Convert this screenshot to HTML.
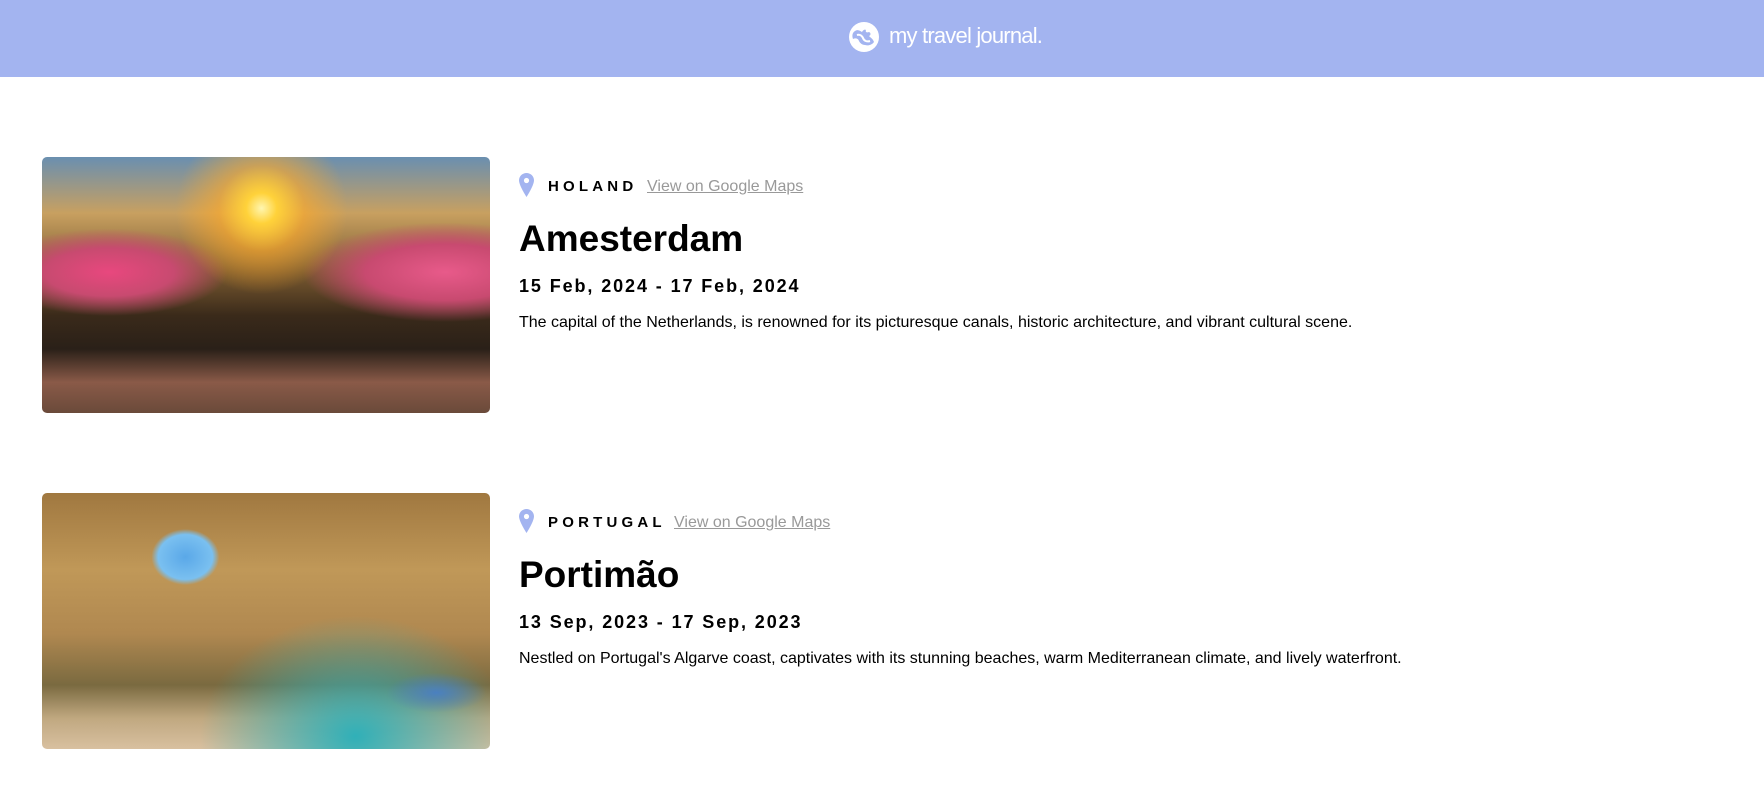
<!DOCTYPE html>
<html><head><meta charset="utf-8"><style>
*{margin:0;padding:0;box-sizing:border-box}
body{width:1764px;height:786px;overflow:hidden;background:#fff;font-family:"Liberation Sans",Arial,sans-serif;position:relative}
header{height:77px;background:#a3b4f0;position:relative}
.logo{position:absolute;left:848px;top:21px;width:32px;height:32px}
.brand{position:absolute;left:889px;top:23px;color:#fff;font-size:22px;letter-spacing:-0.8px}
.img{position:absolute;left:42px;width:448px;height:256px;border-radius:5px;overflow:hidden}
.pin{position:absolute;left:519px;width:15px;height:24px}
.country{position:absolute;left:548px;font-size:15px;font-weight:bold;letter-spacing:4.2px}
.maps{position:absolute;font-size:16px;color:#999;text-decoration:underline}
h1{position:absolute;left:519px;font-size:37px;font-weight:bold}
.date{position:absolute;left:519px;font-size:18px;font-weight:bold;letter-spacing:1.9px}
.desc{position:absolute;left:519px;font-size:16px}
</style></head><body>
<header>
<svg class="logo" viewBox="0 0 32 32"><circle cx="16" cy="16" r="15" fill="#fff"/><path d="M7 10c3-2 5 0 7 1 1-2 3-3 4-2-1 2 1 3 3 2 2 1 2 3 0 4 2 2 4 3 5 6-2 3-6 4-9 3-3 0-5-2-6-4-1-3-4-3-6-2-1-3-1-6 2-8z" fill="#a3b4f0"/><path d="M9 14c3-1 5 1 6 3 1 3 4 4 7 3" stroke="#fff" stroke-width="2" fill="none"/></svg>
<div class="brand">my travel journal.</div>
</header>

<div class="img" style="top:157px;background:
radial-gradient(circle at 49% 20%,#fff6b0 0,#ffd23a 5%,rgba(255,170,40,.6) 14%,transparent 28%),
radial-gradient(ellipse at 15% 45%,#e8487e 0,#c84a70 12%,transparent 22%),
radial-gradient(ellipse at 90% 45%,#e85a8a 0,#c84a70 14%,transparent 25%),
linear-gradient(180deg,#6a8fb0 0%,#c8a060 22%,#7a5a30 45%,#3a2a1a 62%,#2a2018 75%,#8a5a48 88%,#6a4a3a 100%);"></div>
<svg class="pin" style="top:173px" viewBox="0 0 15 24"><path d="M7.5 0C3.4 0 0 3.3 0 7.4 0 12.5 7.5 24 7.5 24S15 12.5 15 7.4C15 3.3 11.6 0 7.5 0z" fill="#a3b4f0"/><circle cx="7.5" cy="7.5" r="2.6" fill="#fff"/></svg>
<div class="country" style="top:178px">HOLAND</div>
<div class="maps" style="left:647px;top:178px">View on Google Maps</div>
<h1 style="top:218px">Amesterdam</h1>
<div class="date" style="top:276px">15 Feb, 2024 - 17 Feb, 2024</div>
<div class="desc" style="top:314px">The capital of the Netherlands, is renowned for its picturesque canals, historic architecture, and vibrant cultural scene.</div>

<div class="img" style="top:493px;background:
radial-gradient(ellipse 34px 28px at 32% 25%,#5aa8e8 0,#7ac0f0 80%,transparent 100%),
radial-gradient(ellipse 50px 20px at 88% 78%,#4a80c0 0,transparent 100%),
radial-gradient(ellipse at 70% 95%,#30b0b8 0,transparent 35%),
linear-gradient(180deg,#a07840 0%,#c09858 30%,#b08850 55%,#7a6a40 75%,#c0a880 88%,#d8c0a0 100%);"></div>
<svg class="pin" style="top:509px" viewBox="0 0 15 24"><path d="M7.5 0C3.4 0 0 3.3 0 7.4 0 12.5 7.5 24 7.5 24S15 12.5 15 7.4C15 3.3 11.6 0 7.5 0z" fill="#a3b4f0"/><circle cx="7.5" cy="7.5" r="2.6" fill="#fff"/></svg>
<div class="country" style="top:514px">PORTUGAL</div>
<div class="maps" style="left:674px;top:514px">View on Google Maps</div>
<h1 style="top:554px">Portimão</h1>
<div class="date" style="top:612px">13 Sep, 2023 - 17 Sep, 2023</div>
<div class="desc" style="top:650px">Nestled on Portugal's Algarve coast, captivates with its stunning beaches, warm Mediterranean climate, and lively waterfront.</div>
</body></html>
